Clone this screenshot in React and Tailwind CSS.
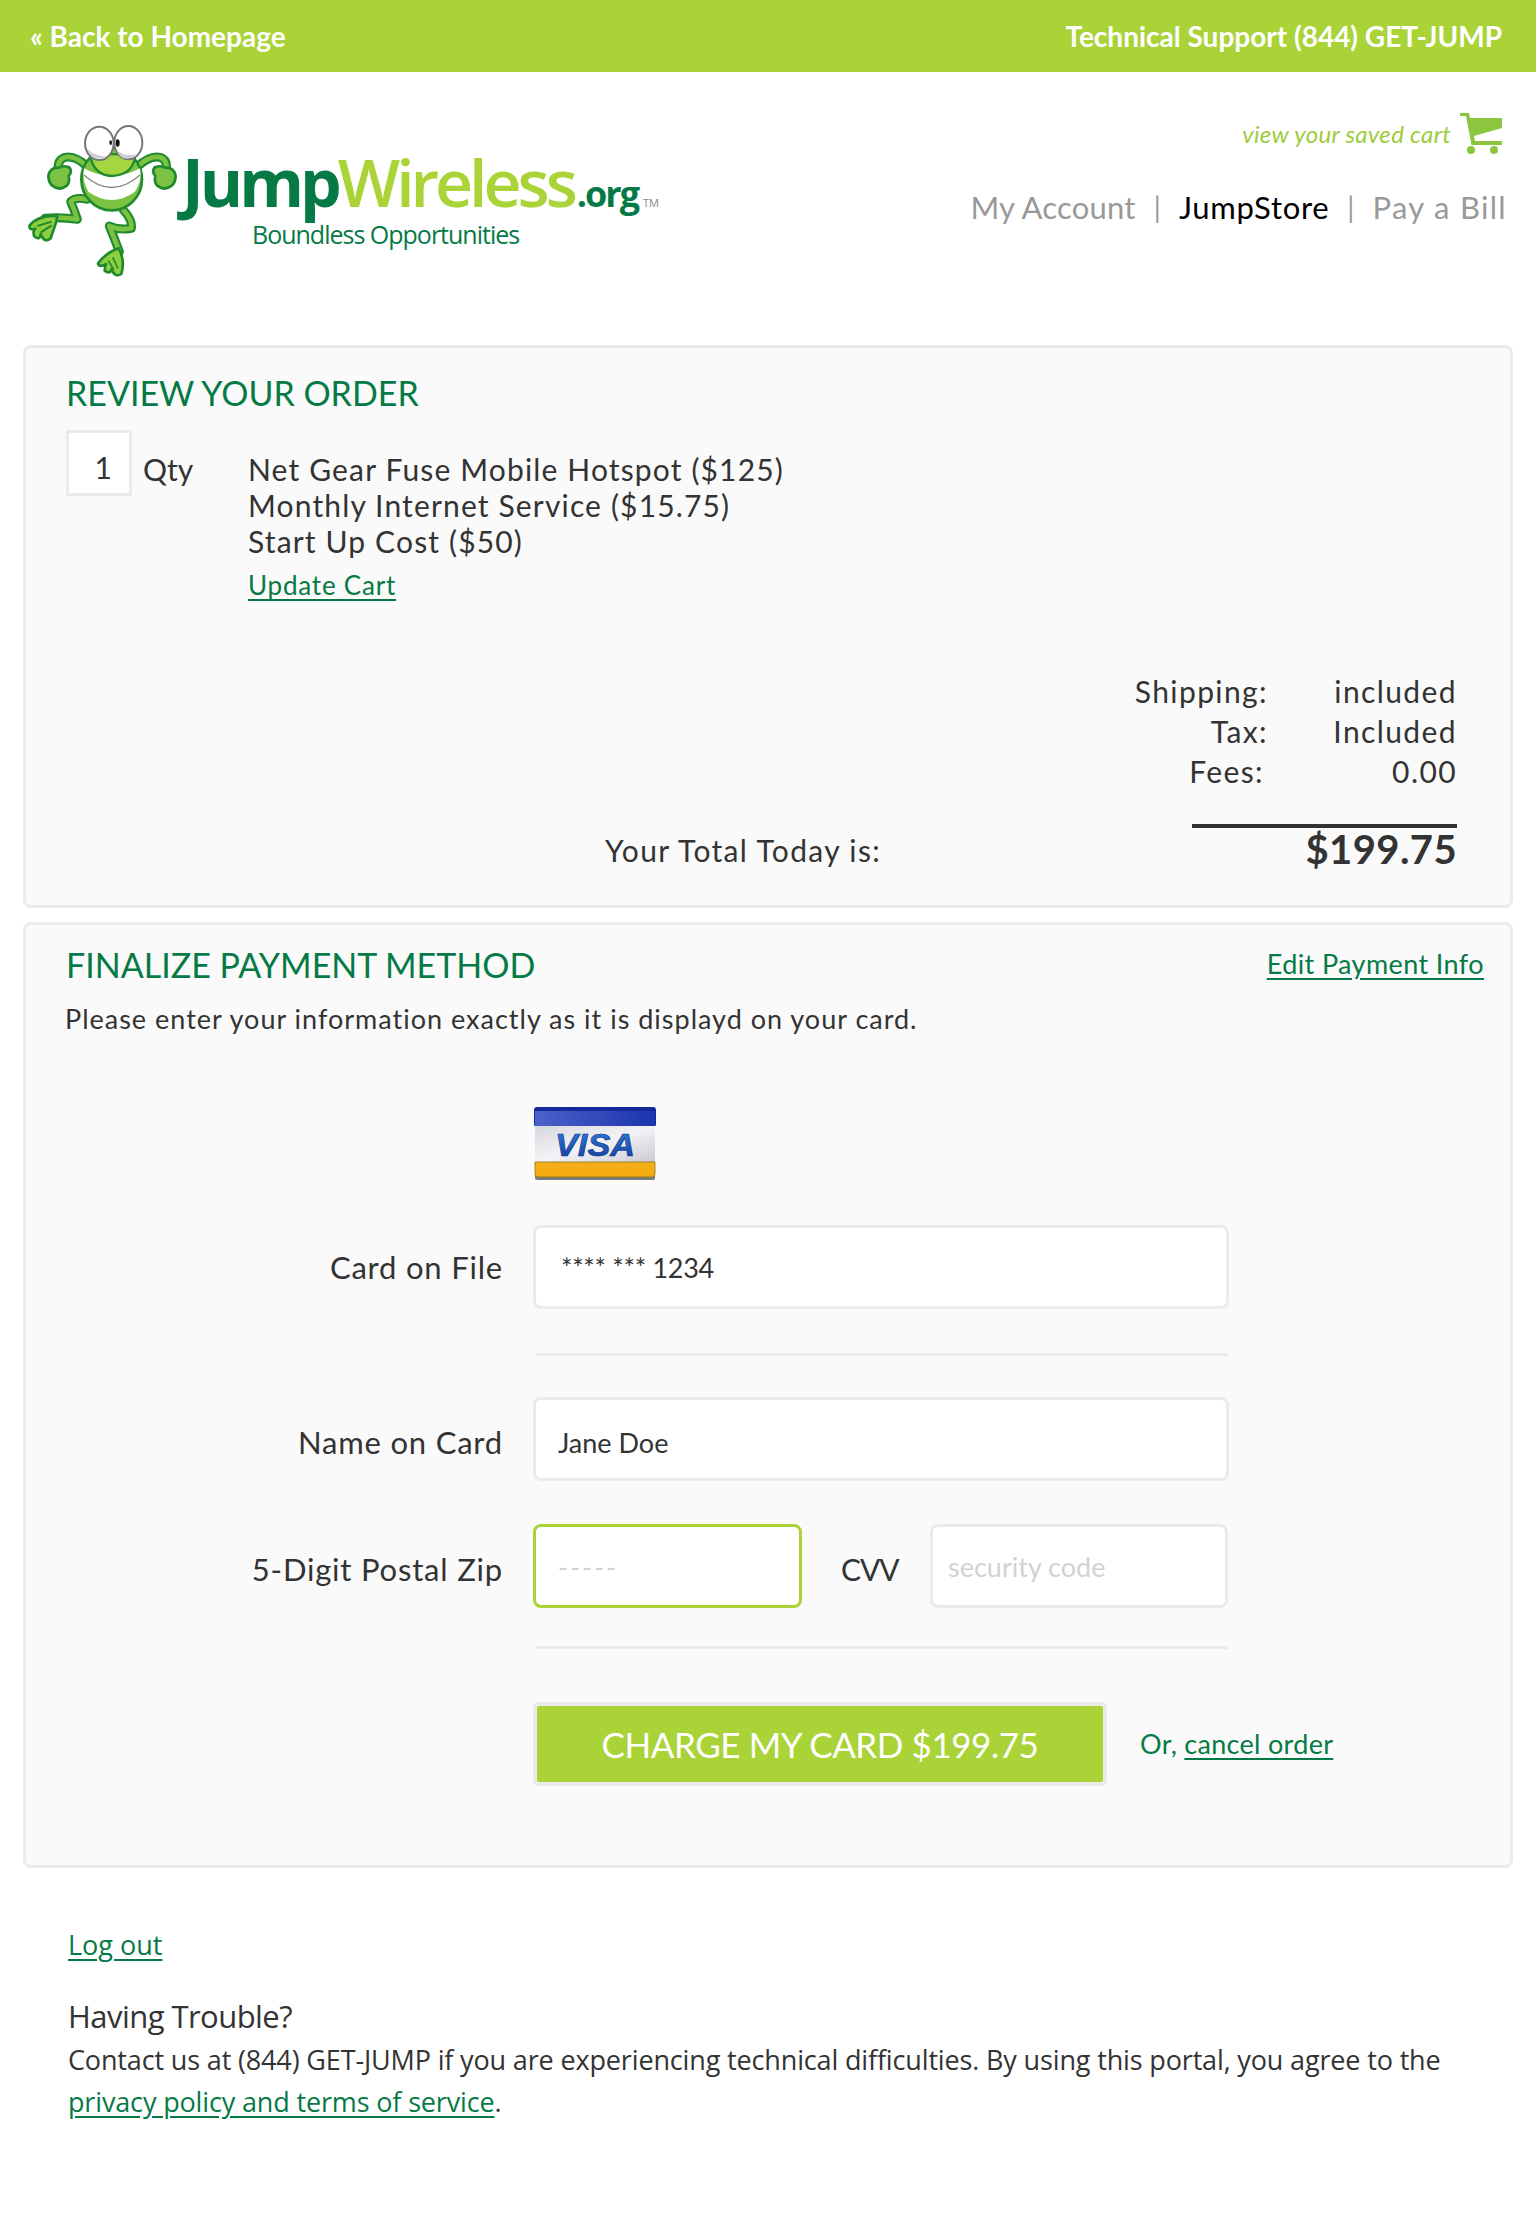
import React from 'react';

const sans = "font-['Lato','Noto_Sans',sans-serif]";

function Frog() {
  const limb = (d, key) => (
    <g key={key} fill="none" strokeLinecap="round" strokeLinejoin="round">
      <path d={d} stroke="#1f8a2e" strokeWidth="27" />
      <path d={d} stroke="#7cc242" strokeWidth="14" />
    </g>
  );
  return (
    <svg viewBox="0 0 534 570" className="w-[178px] h-[190px] shrink-0">
      {limb('M262 200 Q225 165 195 172 Q170 180 175 215', 'a')}
      {limb('M412 200 Q450 165 480 172 Q505 180 498 215', 'b')}
      <path d="M145 228 Q150 200 178 203 Q188 195 208 202 Q218 215 206 228 Q214 258 180 266 Q146 262 145 228Z" fill="#7cc242" stroke="#1f8a2e" strokeWidth="8" />
      <path d="M527 228 Q522 200 494 203 Q484 195 464 202 Q454 215 466 228 Q458 258 492 266 Q526 262 527 228Z" fill="#7cc242" stroke="#1f8a2e" strokeWidth="8" />
      {limb('M262 298 Q225 290 212 305 Q225 335 232 358 Q180 350 135 355', 'c')}
      <path d="M88 378 Q112 345 172 348 L168 368 L152 415 Q134 432 122 402 Q120 424 102 408 Q98 392 106 386 Q88 392 88 378Z" fill="#8fce3f" stroke="#1f8a2e" strokeWidth="8" strokeLinejoin="round" />
      <path d="M112 378 L155 365 M122 398 L155 376" stroke="#1f8a2e" strokeWidth="6" fill="none" />
      {limb('M370 330 Q398 360 394 385 Q360 392 328 378 Q345 420 358 455', 'd')}
      <path d="M294 490 Q318 458 356 445 Q376 480 364 522 Q346 534 334 508 Q330 524 314 512 Q314 498 318 492 Q298 504 294 490Z" fill="#8fce3f" stroke="#1f8a2e" strokeWidth="8" strokeLinejoin="round" />
      <path d="M325 482 L342 510 M338 472 L354 505" stroke="#1f8a2e" strokeWidth="5" fill="none" />
      <ellipse cx="335" cy="238" rx="91" ry="93" fill="#7cc242" stroke="#1f8a2e" strokeWidth="8" />
      <path d="M252 205 Q335 250 420 205 Q428 240 405 275 Q335 325 265 275 Q245 240 252 205Z" fill="#fff" />
      <path d="M252 225 Q335 300 420 225" fill="none" stroke="#8a8a8a" strokeWidth="4" />
      <path d="M258 280 Q335 325 412 280 Q380 322 335 324 Q285 322 258 280Z" fill="#7cc242" />
      <path d="M272 175 Q335 150 404 175 Q395 225 335 228 Q285 225 272 175Z" fill="#a4d63f" stroke="#1f8a2e" strokeWidth="7" />
      <ellipse cx="298" cy="130" rx="43" ry="50" fill="#fff" stroke="#777" strokeWidth="6" />
      <ellipse cx="385" cy="128" rx="42" ry="50" fill="#fff" stroke="#777" strokeWidth="6" />
      <path d="M261 145 Q285 172 320 168 Q300 180 280 172 Q265 162 261 145Z" fill="#cfcfd4" />
      <path d="M350 150 Q375 172 408 162 Q390 180 368 174 Q355 165 350 150Z" fill="#cfcfd4" />
      <ellipse cx="332" cy="128" rx="4" ry="7" fill="#111" />
      <ellipse cx="353" cy="129" rx="6" ry="11" fill="#111" />
    </svg>
  );
}

function Logo() {
  return (
    <div className="flex mt-[28px] h-[190px]">
      <Frog />
      <div className="font-['Open_Sans',sans-serif] mt-[45px] ml-[4px]">
        <div className="flex items-baseline leading-[72px] h-[72px] whitespace-nowrap">
          <span className="text-[66px] font-bold tracking-[-4px] text-[#067a46]">Jump</span>
          <span className="text-[66px] font-semibold tracking-[-4px] text-[#a9d337]">Wireless</span>
          <span className="text-[36px] font-bold tracking-[-2px] text-[#067a46] ml-[3px]">.org</span>
          <span className="text-[11px] text-[#888] ml-[5px]">TM</span>
        </div>
        <div className="ml-[70px] text-[25px] leading-[30px] tracking-[-1px] text-[#067a46] mt-[2px]">Boundless Opportunities</div>
      </div>
    </div>
  );
}

function Cart() {
  return (
    <svg viewBox="0 0 42 41" className="w-[42px] h-[41px]" fill="#8cc63f">
      <path d="M0 0H9L10 5H42V15L14 23L15 28H42V32H11.5L6 3H0Z" />
      <circle cx="11" cy="37" r="4" />
      <circle cx="34" cy="37" r="4" />
    </svg>
  );
}

function Visa() {
  return (
    <svg viewBox="0 0 122 74" className="w-[122px] h-[74px]">
      <defs>
        <linearGradient id="vb" x1="0" x2="1" y1="0" y2="0">
          <stop offset="0" stopColor="#4a62c8" />
          <stop offset="1" stopColor="#1c34ad" />
        </linearGradient>
        <linearGradient id="vm" x1="0" x2="1" y1="0" y2="1">
          <stop offset="0" stopColor="#d6d6de" />
          <stop offset="0.5" stopColor="#f3f3f6" />
          <stop offset="1" stopColor="#c9c9d0" />
        </linearGradient>
        <linearGradient id="vo" x1="0" x2="0" y1="0" y2="1">
          <stop offset="0" stopColor="#f2b01d" />
          <stop offset="1" stopColor="#f6a909" />
        </linearGradient>
        <linearGradient id="vt" x1="0" x2="0" y1="0" y2="1">
          <stop offset="0" stopColor="#2f7fe0" />
          <stop offset="1" stopColor="#123c9c" />
        </linearGradient>
      </defs>
      <rect x="1" y="66" width="120" height="7" rx="2" fill="#444" opacity="0.7" />
      <rect x="0" y="0" width="122" height="20" rx="3" fill="#17299a" />
      <rect x="1" y="4" width="120" height="15" fill="url(#vb)" />
      <rect x="1" y="19" width="120" height="36" fill="url(#vm)" />
      <path d="M1 55H121V67Q121 70 118 70H4Q1 70 1 67Z" fill="url(#vo)" stroke="#8a7a10" strokeWidth="0.8" />
      <text x="21" y="49" textLength="80" lengthAdjust="spacingAndGlyphs" fontFamily="Liberation Sans" fontStyle="italic" fontWeight="700" fontSize="32" fill="url(#vt)" stroke="#0d2f80" strokeWidth="0.6">VISA</text>
    </svg>
  );
}

function Field({ className = '', ...props }) {
  return (
    <input
      readOnly
      className={`h-[84px] bg-white rounded-[8px] border-[3px] outline-none text-[#333] text-[27px] placeholder:text-[#d2d2d2] ${className}`}
      {...props}
    />
  );
}

function Label({ children, className = '' }) {
  return <div className={`w-[507px] pr-[30px] text-right text-[31px] text-[#333] tracking-[0.8px] shrink-0 ${className}`}>{children}</div>;
}

function App() {
  return (
    <div className={`${sans} bg-white h-[2214px] text-[#333] overflow-hidden`}>
      <div className="h-[72px] bg-[#a9d337] flex items-center justify-between pl-[30px] pr-[34px] pb-[1px] text-white font-bold text-[28px]">
        <a>« Back to Homepage</a>
        <a>Technical Support (844) GET-JUMP</a>
      </div>

      <header className="h-[273px] flex justify-between">
        <Logo />
        <div className="pr-[29px] flex flex-col items-end pt-[41px]">
          <div className="flex items-center gap-[9px] pr-[5px]">
            <span className="italic text-[#9ccc3c] text-[24px] tracking-[0.3px]">view your saved cart</span>
            <Cart />
          </div>
          <nav className="flex items-center text-[31px] mt-[30px] text-[#999] tracking-[0.2px]">
            <a>My Account</a>
            <span className="mx-[18px] text-[#999] text-[28px]">|</span>
            <a className="text-black tracking-[0.7px]">JumpStore</a>
            <span className="mx-[18px] text-[#999] text-[28px]">|</span>
            <a className="tracking-[1.3px]">Pay a Bill</a>
          </nav>
        </div>
      </header>

      <section className="mx-[23px] h-[563px] border-[3px] border-[#ebebeb] rounded-[8px] bg-[#fafafa] pl-[40px] pr-[53px] pt-[27px]">
        <h2 className="text-[#067a46] text-[34px] leading-[36px]">REVIEW YOUR ORDER</h2>
        <div className="flex mt-[19px]">
          <div className="w-[66px] h-[66px] border-[3px] border-[#ebebeb] bg-white flex items-center justify-end pr-[17px] pt-[9px] text-[30px]">1</div>
          <div className="w-[116px] pl-[11px] pt-[21px] text-[30px] leading-[36px]">Qty</div>
          <div className="pt-[21px] text-[30px] leading-[36px] tracking-[1.15px]">
            <div>Net Gear Fuse Mobile Hotspot ($125)</div>
            <div>Monthly Internet Service ($15.75)</div>
            <div>Start Up Cost ($50)</div>
            <a className="block mt-[8px] text-[26px] text-[#067a46] underline underline-offset-4 tracking-[0.8px]">Update Cart</a>
          </div>
        </div>
        <div className="mt-[68px] grid grid-cols-[1fr_189px] text-right text-[30px] leading-[40px] tracking-[1.4px]">
          <div>Shipping:</div>
          <div>included</div>
          <div>Tax:</div>
          <div>Included</div>
          <div className="pr-[4px]">Fees:</div>
          <div>0.00</div>
        </div>
        <div className="flex items-start justify-between mt-[33px]">
          <div className="ml-[539px] mt-[6px] text-[30px] leading-[40px] tracking-[1.35px]">Your Total Today is:</div>
          <div className="w-[265px] border-t-[4px] border-[#333] text-right text-[40px] font-bold leading-[42px] tracking-[0.4px]">$199.75</div>
        </div>
      </section>

      <section className="mx-[23px] mt-[14px] h-[946px] border-[3px] border-[#ebebeb] rounded-[8px] bg-[#fafafa] pr-[26px] pt-[22px]">
        <div className="flex justify-between pl-[40px]">
          <h2 className="text-[#067a46] text-[34px] leading-[36px]">FINALIZE PAYMENT METHOD</h2>
          <a className="text-[#067a46] text-[27px] leading-[36px] underline underline-offset-4 -mt-[1px] tracking-[0.4px]">Edit Payment Info</a>
        </div>
        <p className="pl-[39px] text-[27px] leading-[36px] mt-[18px] tracking-[1px]">Please enter your information exactly as it is displayd on your card.</p>
        <div className="ml-[508px] mt-[70px]"><Visa /></div>

        <div className="flex items-center mt-[44px]">
          <Label>Card on File</Label>
          <Field className="w-[696px] border-[#ebebeb] pl-[25px] tracking-[-0.3px]" value="**** *** 1234" />
        </div>
        <div className="ml-[510px] w-[692px] h-[3px] bg-[#ebebeb] mt-[44px]" />
        <div className="flex items-center mt-[41px]">
          <Label className="pt-[6px]">Name on Card</Label>
          <Field className="w-[696px] border-[#ebebeb] pl-[22px] pt-[6px]" value="Jane Doe" />
        </div>
        <div className="flex items-center mt-[43px]">
          <Label className="pt-[6px]">5-Digit Postal Zip</Label>
          <Field className="w-[269px] border-[#a9d337] pl-[22px] tracking-[2px]" placeholder="-----" />
          <div className="w-[128px] pl-[39px] pt-[6px] text-[30px] tracking-[-1px]">CVV</div>
          <Field className="w-[298px] border-[#ebebeb] pl-[15px]" placeholder="security code" />
        </div>
        <div className="ml-[510px] w-[692px] h-[3px] bg-[#ebebeb] mt-[38px]" />
        <div className="flex items-center mt-[53px]">
          <div className="w-[507px] shrink-0" />
          <button className="w-[574px] h-[84px] border-[4px] border-[#ebebeb] rounded-[6px] bg-[#a9d337] text-white text-[35px] tracking-[-0.45px]">CHARGE MY CARD $199.75</button>
          <div className="ml-[33px] text-[27px] text-[#067a46] tracking-[0.3px]">Or, <a className="underline underline-offset-4">cancel order</a></div>
        </div>
      </section>

      <footer className="px-[68px] pt-[58px] font-['Open_Sans',sans-serif]">
        <a className="text-[#067a46] text-[27px] leading-[38px] underline underline-offset-4 block">Log out</a>
        <h3 className="text-[31px] leading-[42px] mt-[31px] tracking-[-0.55px] font-normal">Having Trouble?</h3>
        <p className="text-[27px] leading-[42px] tracking-[-0.15px] mt-[2px]">
          Contact us at (844) GET-JUMP if you are experiencing technical difficulties. By using this portal, you agree to the{' '}
          <a className="text-[#067a46] underline underline-offset-4">privacy policy and terms of service</a>.
        </p>
      </footer>
    </div>
  );
}

export default App;
